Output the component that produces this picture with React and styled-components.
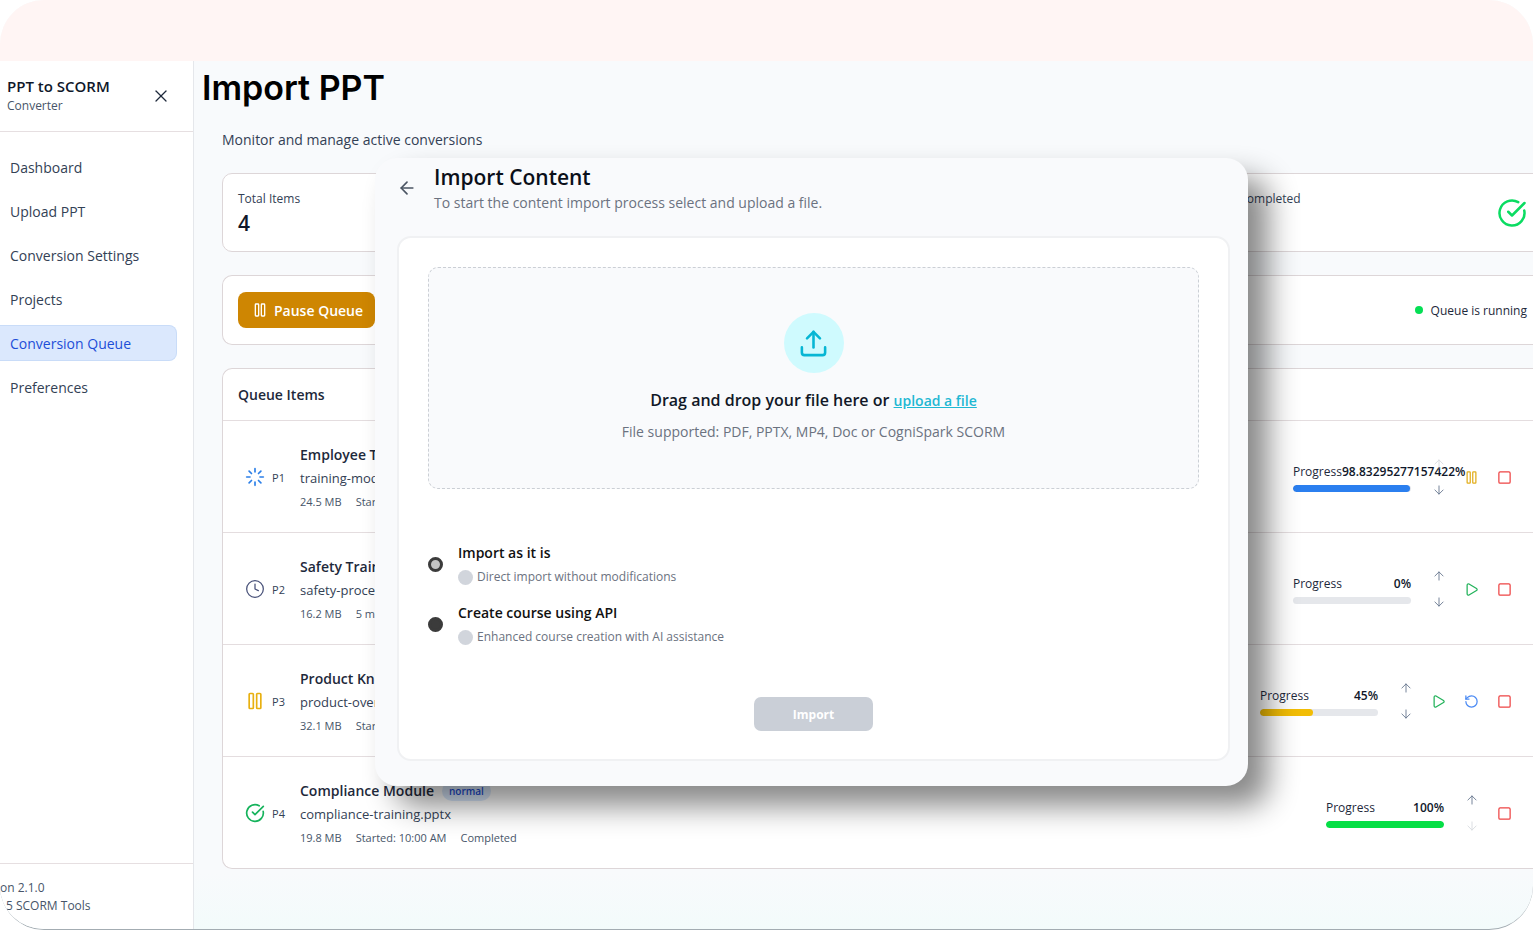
import React, { useState } from 'react';
import styled, { createGlobalStyle } from 'styled-components';
import {
    ArrowDown,
    ArrowLeft,
    ArrowUp,
    CircleCheckBig,
    Clock,
    Loader,
    Pause,
    Play,
    RotateCcw,
    Square,
    Upload,
    X,
} from 'lucide-react';

const GlobalStyle = createGlobalStyle`
    * {
        box-sizing: border-box;
    }
    body {
        margin: 0;
        background: #ffffff;
        color: #1e293b;
        font-family: "Open Sans", "Noto Sans", sans-serif;
        font-size: 14px;
    }
    h1, h2, h3, p, ul {
        margin: 0;
        padding: 0;
    }
    button {
        font-family: inherit;
        cursor: pointer;
    }
`

const Frame = styled.div`
    position: relative;
    display: flex;
    flex-direction: column;
    min-height: 100vh;
    overflow: hidden;
    border-radius: 44px;
    border-bottom: 1px solid #a3acb2;
    background: linear-gradient(#f8fafc 94%, #f3fbfb);
`

const TopBand = styled.div`
    height: 61px;
    background: #fff5f4;
`

const Body = styled.div`
    display: flex;
    flex: 1;
`

const Sidebar = styled.aside`
    display: flex;
    flex-direction: column;
    flex: 0 0 194px;
    border-right: 1px solid #e5e7eb;
    background: #ffffff;
`

const Brand = styled.div`
    display: flex;
    align-items: center;
    justify-content: space-between;
    height: 71px;
    padding: 0 22px 0 7px;
    border-bottom: 1px solid #e6dfe1;
`

const BrandName = styled.div`
    color: #0f172a;
    font-size: 15px;
    font-weight: 600;
    line-height: 20px;
`

const BrandSub = styled.div`
    color: #475569;
    font-size: 12px;
    line-height: 20px;
`

const IconButton = styled.button`
    display: flex;
    align-items: center;
    justify-content: center;
    width: 20px;
    height: 20px;
    padding: 0;
    border: none;
    background: none;
    color: #1e293b;
`

const Nav = styled.nav`
    display: flex;
    flex: 1;
    flex-direction: column;
    gap: 8px;
    padding: 17px 16px 0 0;
`

const NavLink = styled.a`
    display: flex;
    align-items: center;
    height: 36px;
    padding-left: 10px;
    border: 1px solid ${props => props.$active ? '#c9dcf8' : 'transparent'};
    border-left: none;
    border-radius: 0 8px 8px 0;
    background: ${props => props.$active ? '#dbe8fd' : 'none'};
    color: ${props => props.$active ? '#1d4ed8' : '#334155'};
    font-size: 14px;
    text-decoration: none;
`

const Version = styled.div`
    padding: 15px 0 14px;
    border-top: 1px solid #e6dfe1;
    color: #475569;
    font-size: 12px;
    line-height: 18px;
    p + p {
        padding-left: 6px;
    }
`

const Main = styled.main`
    flex: 1;
    min-width: 0;
    padding-bottom: 58px;
`

const PageTitle = styled.h1`
    padding: 5px 0 0 8px;
    color: #000000;
    font-family: Inter, sans-serif;
    font-size: 34px;
    font-weight: 600;
    line-height: 44px;
`

const Content = styled.div`
    display: flex;
    flex-direction: column;
    gap: 23px;
    padding: 20px 0 0 28px;
`

const Lead = styled.p`
    color: #334155;
    font-size: 14px;
    line-height: 20px;
`

const Stats = styled.div`
    display: grid;
    grid-template-columns: repeat(4, 1fr);
    gap: 24px;
`

const Panel = styled.section`
    border: 1px solid #ddd6d8;
    border-right-width: ${props => props.$bleed ? '0' : '1px'};
    border-radius: ${props => props.$bleed ? '10px 0 0 10px' : '10px'};
    background: #ffffff;
`

const StatCard = styled(Panel)`
    display: flex;
    align-items: center;
    justify-content: space-between;
    grid-column: span ${props => props.$span || 1};
    height: 79px;
    padding: 0 6px 0 15px;
`

const StatLabel = styled.div`
    color: #334155;
    font-size: 12px;
    line-height: 20px;
`

const StatValue = styled.div`
    color: ${props => props.$color || '#0f172a'};
    font-size: 21px;
    font-weight: 600;
    line-height: 28px;
`

const Controls = styled(Panel)`
    display: flex;
    align-items: center;
    justify-content: space-between;
    height: 70px;
    padding: 0 6px 0 15px;
`

const PauseButton = styled.button`
    display: flex;
    align-items: center;
    gap: 6px;
    height: 36px;
    padding: 0 12px 0 14px;
    border: none;
    border-radius: 8px;
    background: #ce8602;
    color: #ffffff;
    font-size: 14px;
    font-weight: 600;
`

const Running = styled.div`
    display: flex;
    align-items: center;
    gap: 8px;
    color: #1e293b;
    font-size: 12px;
    &::before {
        content: '';
        width: 8px;
        height: 8px;
        border-radius: 50%;
        background: #05df55;
    }
`

const QueueTitle = styled.h2`
    padding: 0 15px;
    color: #1e293b;
    font-size: 14px;
    font-weight: 600;
    line-height: 51px;
`

const Row = styled.li`
    display: flex;
    align-items: center;
    padding: 19px 16px 18px 22px;
    border-top: 1px solid #e4dddf;
`

const QueueList = styled.ul`
    list-style: none;
`

const Priority = styled.span`
    width: 28px;
    margin-left: 7px;
    color: #334155;
    font-size: 11px;
`

const Info = styled.div`
    flex: 1;
    min-width: 0;
    padding-top: 4px;
`

const ItemName = styled.h3`
    display: flex;
    align-items: center;
    gap: 8px;
    color: #1e293b;
    font-size: 14px;
    font-weight: 600;
    line-height: 22px;
`

const Badge = styled.span`
    padding: 0 7px;
    border-radius: 10px;
    background: #dbeafe;
    color: #1d4ed8;
    font-size: 10px;
    font-weight: 600;
    line-height: 20px;
`

const FileName = styled.p`
    color: #334155;
    font-size: 13px;
    line-height: 24px;
`

const Meta = styled.p`
    display: flex;
    gap: 14px;
    color: #475569;
    font-size: 11px;
    line-height: 24px;
`

const Progress = styled.div`
    width: 118px;
    margin-right: 15px;
`

const ProgressLabel = styled.div`
    display: flex;
    justify-content: space-between;
    margin-bottom: 3px;
    color: #1e293b;
    font-size: 12px;
    line-height: 20px;
    white-space: nowrap;
    b {
        color: #0f172a;
        font-weight: 600;
    }
`

const Track = styled.div`
    height: 7px;
    overflow: hidden;
    border-radius: 4px;
    background: #e5e7eb;
`

const Fill = styled.div`
    height: 100%;
    border-radius: 4px;
    background: ${props => props.$color};
`

const Mover = styled.div`
    display: flex;
    flex-direction: column;
    gap: 14px;
`

const Actions = styled.div`
    display: flex;
    align-items: center;
    gap: 8px;
`

const ActionButton = styled(IconButton)`
    width: 25px;
    height: ${props => props.$small ? '12px' : '25px'};
    color: ${props => props.$color || '#64748b'};
    &:disabled {
        color: #d6d9de;
    }
`

const Dialog = styled.section`
    position: absolute;
    top: 158px;
    left: 375px;
    right: 285px;
    padding: 4px 18px 25px 22px;
    border-radius: 22px;
    background: #f9fafc;
    box-shadow: 20px 20px 30px rgba(0, 0, 0, 0.47);
`

const DialogHead = styled.header`
    display: flex;
    align-items: center;
    gap: 17px;
    margin-bottom: 22px;
    color: #4b5563;
`

const DialogTitle = styled.h2`
    color: #0b0f19;
    font-size: 21px;
    font-weight: 600;
    line-height: 30px;
`

const DialogSub = styled.p`
    color: #6b7280;
    font-size: 14px;
    line-height: 22px;
`

const Form = styled.form`
    display: flex;
    flex-direction: column;
    padding: 29px 29px 28px;
    border: 2px solid #f0f1f3;
    border-radius: 14px;
    background: #ffffff;
`

const DropZone = styled.div`
    display: flex;
    flex-direction: column;
    align-items: center;
    height: 222px;
    padding-top: 45px;
    border: 1px dashed #cbcfd5;
    border-radius: 10px;
    background: #f9fafc;
`

const UploadCircle = styled.div`
    display: flex;
    align-items: center;
    justify-content: center;
    width: 60px;
    height: 60px;
    margin-bottom: 14px;
    border-radius: 50%;
    background: #cffafe;
    color: #06b6d4;
`

const DropText = styled.p`
    color: #111827;
    font-size: 16px;
    font-weight: 600;
    line-height: 26px;
    a {
        color: #1fb8d3;
        font-size: 14px;
    }
`

const Supported = styled.p`
    color: #6b7280;
    font-size: 14px;
    line-height: 36px;
`

const Options = styled.div`
    display: flex;
    flex-direction: column;
    gap: 12px;
    margin: 52px 0 48px;
`

const Option = styled.label`
    display: flex;
    gap: 15px;
    cursor: pointer;
`

const Radio = styled.input`
    appearance: none;
    width: 15px;
    height: 15px;
    margin: 16px 0 0;
    border: 3px solid #3b3b3b;
    border-radius: 50%;
    background: #c4c4c4;
    &:checked {
        background: #3b3b3b;
    }
`

const OptionTitle = styled.span`
    display: block;
    color: #111111;
    font-size: 14px;
    font-weight: 600;
    line-height: 24px;
`

const OptionNote = styled.span`
    display: flex;
    align-items: center;
    gap: 4px;
    color: #6b7280;
    font-size: 12px;
    line-height: 24px;
    &::before {
        content: '';
        width: 15px;
        height: 15px;
        border-radius: 50%;
        background: #d1d5dc;
    }
`

const ImportButton = styled.button`
    align-self: center;
    width: 119px;
    height: 34px;
    border: none;
    border-radius: 7px;
    background: #cacfd7;
    color: #ffffff;
    font-size: 12px;
    font-weight: 700;
`

const navItems = ['Dashboard', 'Upload PPT', 'Conversion Settings', 'Projects', 'Conversion Queue', 'Preferences'];

const stats = [
    { label: 'Total Items', value: 4, span: 3 },
    { label: 'Completed', value: 1, color: '#05df55', done: true },
];

const queue = [
    {
        name: 'Employee Training',
        file: 'training-module.pptx',
        meta: ['24.5 MB', 'Started: 10:30 AM'],
        status: <Loader size={20} color="#2b7fe8"/>,
        progress: '98.83295277157422',
        color: '#2b7fef',
        actions: ['pause', 'stop'],
    },
    {
        name: 'Safety Training',
        file: 'safety-procedures.pptx',
        meta: ['16.2 MB', '5 min'],
        status: <Clock size={20} color="#475078" strokeWidth={1.5}/>,
        progress: '0',
        color: '#e5e7eb',
        actions: ['play', 'stop'],
    },
    {
        name: 'Product Knowledge',
        file: 'product-overview.pptx',
        meta: ['32.1 MB', 'Started: 9:45 AM'],
        status: <Pause size={20} color="#e8b011"/>,
        progress: '45',
        color: '#f2bd05',
        actions: ['play', 'retry', 'stop'],
    },
    {
        name: 'Compliance Module',
        file: 'compliance-training.pptx',
        meta: ['19.8 MB', 'Started: 10:00 AM', 'Completed'],
        status: <CircleCheckBig size={20} color="#16b35c"/>,
        progress: '100',
        color: '#05df45',
        actions: ['stop'],
    },
];

const actionTypes = {
    pause: { icon: Pause, color: '#e2ae1c', label: 'Pause' },
    play: { icon: Play, color: '#22b25a', label: 'Resume' },
    retry: { icon: RotateCcw, color: '#4a8af4', label: 'Restart' },
    stop: { icon: Square, color: '#ee4444', label: 'Stop' },
};

const QueueRow = ({ item, index, last }) => (
    <Row>
        {item.status}
        <Priority>P{index + 1}</Priority>
        <Info>
            <ItemName>{item.name} <Badge>normal</Badge></ItemName>
            <FileName>{item.file}</FileName>
            <Meta>{item.meta.map(text => <span key={text}>{text}</span>)}</Meta>
        </Info>
        <Progress>
            <ProgressLabel><span>Progress</span><b>{item.progress}%</b></ProgressLabel>
            <Track><Fill $color={item.color} style={{ width: `${item.progress}%` }}/></Track>
        </Progress>
        <Actions>
            <Mover>
                <ActionButton $small aria-label="Move up" disabled={index === 0}>
                    <ArrowUp size={14} strokeWidth={1.5}/>
                </ActionButton>
                <ActionButton $small aria-label="Move down" disabled={last}>
                    <ArrowDown size={14} strokeWidth={1.5}/>
                </ActionButton>
            </Mover>
            {item.actions.map(type => {
                const { icon: Icon, color, label } = actionTypes[type];
                return (
                    <ActionButton key={type} $color={color} aria-label={label}>
                        <Icon size={15}/>
                    </ActionButton>
                )
            })}
        </Actions>
    </Row>
)

const ImportDialog = () => {
    const [mode, setMode] = useState('api');

    return (
        <Dialog role="dialog" aria-labelledby="import-title">
            <DialogHead>
                <IconButton aria-label="Back"><ArrowLeft size={24} color="#4b5563"/></IconButton>
                <div>
                    <DialogTitle id="import-title">Import Content</DialogTitle>
                    <DialogSub>To start the content import process select and upload a file.</DialogSub>
                </div>
            </DialogHead>
            <Form onSubmit={e => e.preventDefault()}>
                <DropZone>
                    <UploadCircle><Upload size={31}/></UploadCircle>
                    <DropText>Drag and drop your file here or <a href="#upload">upload a file</a></DropText>
                    <Supported>File supported: PDF, PPTX, MP4, Doc or CogniSpark SCORM</Supported>
                </DropZone>
                <Options>
                    <Option>
                        <Radio type="radio" name="mode" checked={mode === 'asis'} onChange={() => setMode('asis')}/>
                        <span>
                            <OptionTitle>Import as it is</OptionTitle>
                            <OptionNote>Direct import without modifications</OptionNote>
                        </span>
                    </Option>
                    <Option>
                        <Radio type="radio" name="mode" checked={mode === 'api'} onChange={() => setMode('api')}/>
                        <span>
                            <OptionTitle>Create course using API</OptionTitle>
                            <OptionNote>Enhanced course creation with AI assistance</OptionNote>
                        </span>
                    </Option>
                </Options>
                <ImportButton type="submit">Import</ImportButton>
            </Form>
        </Dialog>
    )
}

const App = () => (
    <Frame>
        <GlobalStyle/>
        <TopBand/>
        <Body>
            <Sidebar>
                <Brand>
                    <div>
                        <BrandName>PPT to SCORM</BrandName>
                        <BrandSub>Converter</BrandSub>
                    </div>
                    <IconButton aria-label="Close menu"><X size={20} strokeWidth={1.5}/></IconButton>
                </Brand>
                <Nav>
                    {navItems.map(item => (
                        <NavLink key={item} href="#" $active={item === 'Conversion Queue'}>{item}</NavLink>
                    ))}
                </Nav>
                <Version>
                    <p>on 2.1.0</p>
                    <p>5 SCORM Tools</p>
                </Version>
            </Sidebar>
            <Main>
                <PageTitle>Import PPT</PageTitle>
                <Content>
                    <Lead>Monitor and manage active conversions</Lead>
                    <Stats>
                        {stats.map(stat => (
                            <StatCard key={stat.label} $span={stat.span} $bleed={stat.done}>
                                <div>
                                    <StatLabel>{stat.label}</StatLabel>
                                    <StatValue $color={stat.color}>{stat.value}</StatValue>
                                </div>
                                {stat.done && <CircleCheckBig size={30} color="#0bdc62"/>}
                            </StatCard>
                        ))}
                    </Stats>
                    <Controls $bleed>
                        <PauseButton><Pause size={16}/>Pause Queue</PauseButton>
                        <Running>Queue is running</Running>
                    </Controls>
                    <Panel $bleed>
                        <QueueTitle>Queue Items</QueueTitle>
                        <QueueList>
                            {queue.map((item, index) => (
                                <QueueRow
                                    key={item.name}
                                    item={item}
                                    index={index}
                                    last={index === queue.length - 1}
                                />
                            ))}
                        </QueueList>
                    </Panel>
                </Content>
            </Main>
        </Body>
        <ImportDialog/>
    </Frame>
)

export default App;
